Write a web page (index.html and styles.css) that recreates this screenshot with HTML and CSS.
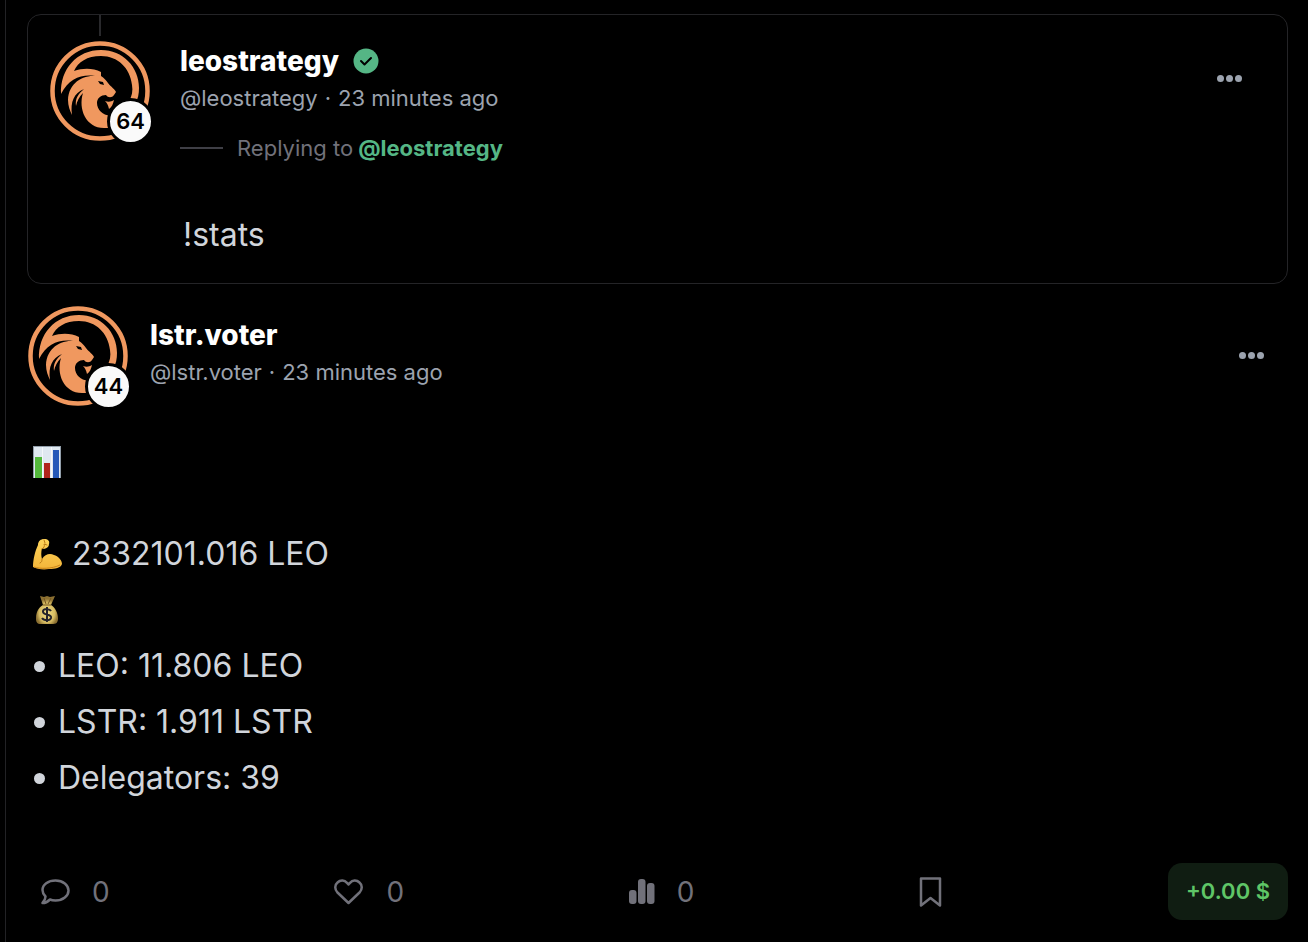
FILE: index.html
```
<!DOCTYPE html>
<html lang="en">
<head>
  <meta charset="UTF-8">
  <meta name="viewport" content="width=device-width, initial-scale=1">
  <title>Thread</title>
  <link rel="stylesheet" href="styles.css">
</head>
<body>

  <!-- LION LOGO, shared by both avatars -->
  <svg class="sprite" aria-hidden="true">
    <symbol id="lion" viewBox="0 0 100 100">
      <circle cx="50" cy="50" r="49" fill="#000"/>
      <circle cx="50" cy="50" r="47.500" fill="none" stroke="#f0985f" stroke-width="4.500"/>
      <g fill="#f0985f">
        <path d="M11 53C10 28 27 9 51 9c22 0 38 17 38 38 0 6-1 11-4 16l-6-3c3-5 4-10 3-16C80 27 68 15 51 15c-14 0-23 6-27 15 9-3 19-3 27 1v5c-16-4-31-1-40 17z"/>
        <path d="M51 35C36 33 19 39 18 59c0 6 2 11 4 15-2-13 2-22 12-26-6 5-9 10-8 17 1-5 3-9 7-13-5 16 3 35 21 35h9V74c-8 2-16-4-16-12 0-5 4-8 9-8 2 3 6 3 8 0l2-3c-1-3-5-5-8-9-2-3-4-5-7-7z"/>
        <path d="M55 60c3 1 6 1 9-1-1 4-2 7-5 9-1-4-2-6-4-8z"/>
      </g>
      <path d="M48 40l5 1 1 3-4-1z"/>
    </symbol>
  </svg>

  <main class="thread">

    <!-- PARENT POST -->
    <article class="card">
      <header class="post-header">
        <div class="avatar">
          <svg class="lion"><use href="#lion"/></svg>
          <span class="level">64</span>
        </div>
        <div class="author">
          <h2>leostrategy
            <svg class="verified" viewBox="0 0 26 26" aria-label="Verified">
              <circle cx="13" cy="13" r="12.5" fill="#55b685"/>
              <path d="M8 13l3.500 3.500L18 10" fill="none" stroke="#000" stroke-width="2" stroke-linecap="round" stroke-linejoin="round"/>
            </svg>
          </h2>
          <p class="meta"><span>@leostrategy</span><span>·</span><time>23 minutes ago</time></p>
          <p class="reply"><span class="dash"></span>Replying to <a href="#">@leostrategy</a></p>
        </div>
        <button class="more" aria-label="More options"><i></i><i></i><i></i></button>
      </header>
      <p class="card-text">!stats</p>
    </article>

    <!-- REPLY -->
    <article class="post">
      <header class="post-header">
        <div class="avatar">
          <svg class="lion"><use href="#lion"/></svg>
          <span class="level">44</span>
        </div>
        <div class="author">
          <h2>lstr.voter</h2>
          <p class="meta"><span>@lstr.voter</span><span>·</span><time>23 minutes ago</time></p>
        </div>
        <button class="more" aria-label="More options"><i></i><i></i><i></i></button>
      </header>

      <div class="post-text">
        <p>
          <svg class="emoji" viewBox="0 0 30 32" aria-label="Bar chart">
            <path d="M1 0h28v32H1z" fill="#929eaa"/>
            <path d="M2 1h26v31H2z" fill="#dfe8f0"/>
            <path d="M3 11h7v21H3z" fill="#53b83b"/>
            <path d="M12 17h6v15h-6z" fill="#b0241c"/>
            <path d="M21 4h6v28h-6z" fill="#2458b8"/>
            <path d="M10.500 1v31M19.500 1v31" stroke="#f4f7fa" stroke-width="1"/>
          </svg>
        </p>
        <div>
          <p>
            <svg class="emoji" viewBox="0 0 30 32" aria-label="Flexed arm">
              <defs>
                <linearGradient id="skin" x2="0" y2="1">
                  <stop offset="0" stop-color="#ffd45a"/>
                  <stop offset="1" stop-color="#f2b53a"/>
                </linearGradient>
              </defs>
              <path d="M1 29C1 22 3 13 6 7c0-4 3-6 6-6 4 0 6 2 5 5 0 3-2 4-5 5l-2-1c-1 4-1 8 0 11 3-5 8-6 12-4 4 1 8 5 8 9-1 4-7 5-13 5-6 1-12 0-16-2z" fill="url(#skin)"/>
              <path d="M10 11c2-1 3-3 2-5l3 1M10 21c0 2 0 3-2 4M12 2l1 3" fill="none" stroke="#bb7b16" stroke-width="1" stroke-linecap="round"/>
              <path d="M2 29c6 2 18 2 26-2" fill="none" stroke="#c98318" stroke-width="1"/>
            </svg>
            2332101.016 LEO
          </p>
          <p>
            <svg class="emoji" viewBox="0 0 30 32" aria-label="Money bag">
              <defs>
                <radialGradient id="bag" cy=".6">
                  <stop offset="0" stop-color="#f0de86"/>
                  <stop offset=".7" stop-color="#d6bb62"/>
                  <stop offset="1" stop-color="#8d7132"/>
                </radialGradient>
              </defs>
              <path d="M8 2l4 1 3-1 3 1 5-1-4 9c4 2 7 8 7 13 0 5-2 6-6 6H9c-4 0-5-2-5-6 0-6 3-11 7-13z" fill="url(#bag)"/>
              <path d="M11 11h8M12 4l2 6M19 4l-3 6" stroke="#745521" stroke-width="1"/>
              <path d="M19 17c-1-2-7-3-8 0-1 5 9 2 8 7-1 3-7 3-9 0M15 13v15" fill="none" stroke="#24232b" stroke-width="2"/>
            </svg>
          </p>
          <ul>
            <li>LEO: 11.806 LEO</li>
            <li>LSTR: 1.911 LSTR</li>
            <li>Delegators: 39</li>
          </ul>
        </div>
      </div>

      <footer class="actions">
        <button>
          <svg class="icon" viewBox="0 0 30 30" aria-label="Comments">
            <path d="M5.500 19.500C3.500 17.500 2.500 15.500 2.500 13 2.500 7.500 8 3.500 15.500 3.500S28.500 8 28.500 13.500 23 23.500 15.500 23.500c-2 0-4-.3-5.500-1C8.500 24 5.500 26 2.500 26c2-2 3-3.500 3-6.500z"/>
          </svg>
          0
        </button>
        <button>
          <svg class="icon" viewBox="0 0 30 30" aria-label="Likes">
            <path d="M14.500 26L3.500 15.500C.5 12.500.5 8 3.500 5.500c3-3 7-2.500 9.500.3l1.500 1.700L16 5.800c2.500-2.800 6.500-3.300 9.500-.3 3 2.500 3 7 0 10z"/>
          </svg>
          0
        </button>
        <button>
          <svg class="icon bars" viewBox="0 0 26 30" aria-label="Views">
            <rect x="0" y="13" width="7.500" height="14" rx="3"/>
            <rect x="9" y="2" width="7.500" height="25" rx="3"/>
            <rect x="18" y="6" width="7.500" height="21" rx="3"/>
          </svg>
          0
        </button>
        <button aria-label="Bookmark">
          <svg class="icon mark" viewBox="0 0 24 30">
            <path d="M2 1.500h19v27L11.500 21 2 28.500z"/>
          </svg>
        </button>
        <button class="payout">+0.00 $</button>
      </footer>
    </article>

  </main>
</body>
</html>
```
FILE: styles.css
```
/* General Reset */
* {
  margin: 0;
  padding: 0;
  box-sizing: border-box;
}
body {
  background: #000;
  color: #d1d5db;
  font-family: Inter, "Liberation Sans", sans-serif;
}
button {
  border: none;
  background: none;
  color: inherit;
  font: inherit;
  cursor: pointer;
}
.sprite {
  position: absolute;
  width: 0;
  height: 0;
}
.thread {
  margin-left: 5px;
  min-height: 100vh;
  padding: 14px 20px 22px 21px;
  border-left: 1px solid #222225;
}

/* ===== PARENT POST ===== */
.card {
  position: relative;
  padding: 26px 23px 20px 22px;
  border: 1px solid #242427;
  border-radius: 14px;
}
/* thread line coming from the post above */
.card::before {
  content: '';
  position: absolute;
  top: 0;
  left: 71px;
  width: 2px;
  height: 21px;
  background: #29292c;
}
.card .post-header {
  gap: 30px;
}
.card-text {
  margin: 44px 0 0 133px;
  font-size: 32px;
  line-height: 56px;
}

/* ===== POST HEADER ===== */
.post-header {
  display: flex;
  align-items: flex-start;
  gap: 22px;
}
.avatar {
  position: relative;
  flex: none;
  width: 100px;
  height: 100px;
}
.lion {
  display: block;
  width: 100px;
  height: 100px;
}
.level {
  position: absolute;
  right: -4px;
  bottom: -4px;
  width: 47px;
  height: 47px;
  border: 3px solid #000;
  border-radius: 50%;
  background: #fafafa;
  color: #000;
  font-size: 22px;
  font-weight: 600;
  line-height: 41px;
  text-align: center;
}
.author {
  flex: 1;
}
.author h2 {
  display: flex;
  align-items: center;
  gap: 14px;
  color: #fff;
  font-size: 28px;
  font-weight: 800;
  line-height: 40px;
}
.verified {
  width: 26px;
  height: 26px;
}
.meta {
  display: flex;
  gap: 7px;
  color: #9ca3af;
  font-size: 22px;
  line-height: 34px;
}
.reply {
  display: flex;
  align-items: center;
  gap: 5px;
  margin-top: 18px;
  color: #71717a;
  font-size: 22px;
  line-height: 30px;
}
.reply a {
  color: #55b685;
  font-weight: 700;
  text-decoration: none;
}
.dash {
  width: 43px;
  height: 2px;
  margin-right: 9px;
  background: #3f3f46;
}
.more {
  display: flex;
  gap: 2px;
  margin: 34px 22px 0 0;
}
.more i {
  width: 7px;
  height: 7px;
  border-radius: 50%;
  background: #9ca3af;
}

/* ===== REPLY ===== */
.post {
  padding-top: 22px;
}
.post .post-header {
  padding: 0 2px 0 1px;
}
.post .author {
  padding-top: 9px;
}
.post .more {
  margin-top: 46px;
}
.post-text {
  display: grid;
  gap: 36px;
  padding: 28px 5px 0;
  font-size: 32px;
  line-height: 56px;
}
.post-text p {
  display: flex;
  align-items: center;
  gap: 10px;
  height: 56px;
}
.emoji {
  width: 30px;
  height: 32px;
}
.post-text li {
  display: flex;
  align-items: center;
  gap: 13px;
  list-style: none;
}
.post-text li::before {
  content: '';
  width: 11px;
  height: 11px;
  margin-left: 2px;
  border-radius: 50%;
  background: #d1d5db;
}

/* ===== ACTIONS ===== */
.actions {
  display: flex;
  align-items: center;
  justify-content: space-between;
  padding-left: 13px;
  margin-top: 57px;
  color: #71717a;
  font-size: 28px;
}
.actions button {
  display: flex;
  align-items: center;
  gap: 22px;
}
.icon {
  width: 30px;
  height: 30px;
  fill: none;
  stroke: #71717a;
  stroke-width: 2.5;
  stroke-linejoin: round;
}
.bars {
  width: 26px;
  fill: #71717a;
  stroke: none;
}
.mark {
  width: 24px;
}
.actions .payout {
  padding: 0 18px;
  border-radius: 14px;
  background: #101d12;
  color: #5fc667;
  font-size: 22px;
  font-weight: 600;
  line-height: 57px;
}
```
